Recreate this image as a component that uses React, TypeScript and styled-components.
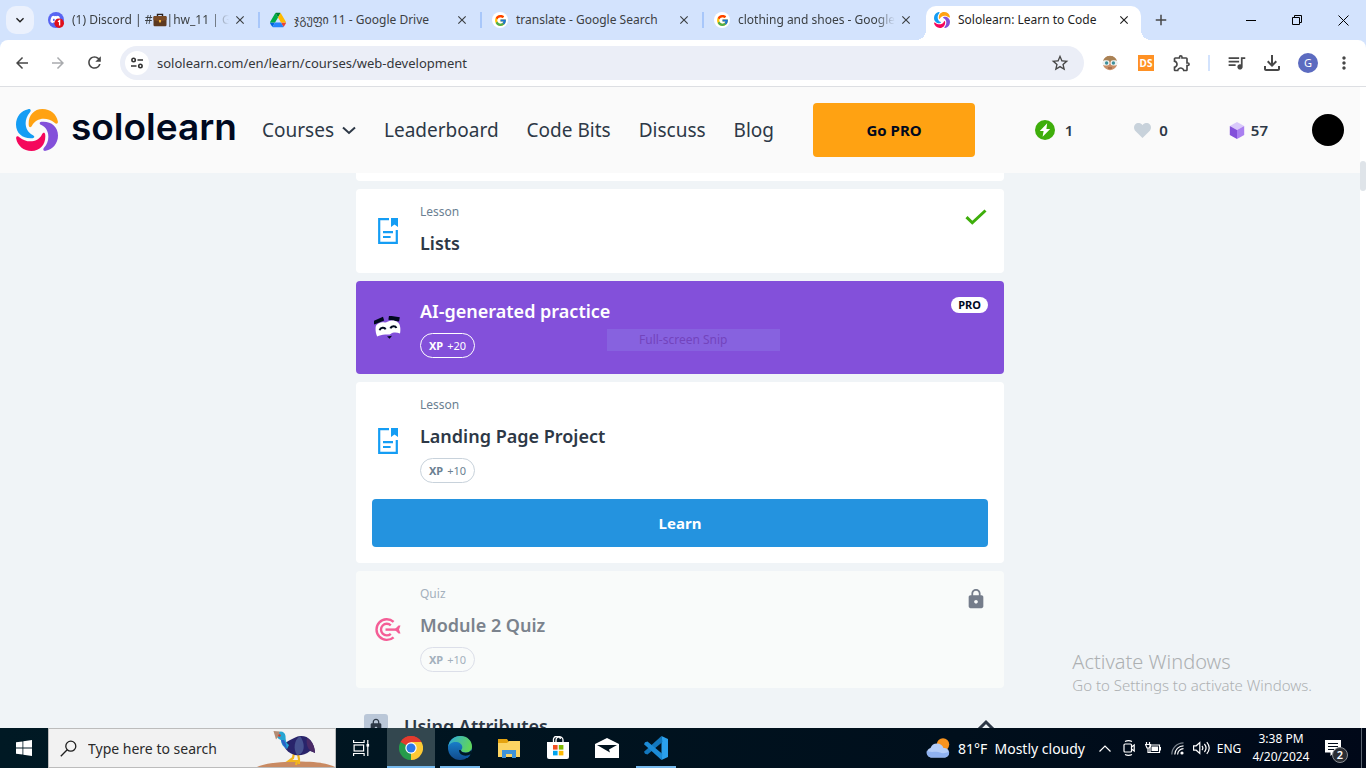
import React from "react";
import styled, { createGlobalStyle, css } from "styled-components";
import {
  MdArrowBack,
  MdArrowForward,
  MdRefresh,
  MdStarBorder,
  MdOutlineExtension,
  MdQueueMusic,
  MdOutlineFileDownload,
  MdMoreVert,
  MdLock,
  MdClose,
  MdAdd,
  MdKeyboardArrowDown,
} from "react-icons/md";
import { FcGoogle } from "react-icons/fc";
import { FaDiscord } from "react-icons/fa";

const systemFont = `"Noto Sans", "DejaVu Sans", sans-serif`;
const siteFont = `"Noto Sans", "Open Sans", sans-serif`;

const GlobalStyle = createGlobalStyle`
  *, *::before, *::after { box-sizing: border-box; }
  body { margin: 0; overflow: hidden; font-family: ${systemFont}; }
  button, input { font-family: inherit; }
  button { border: 0; padding: 0; background: none; color: inherit; cursor: pointer; }
  a { color: inherit; text-decoration: none; }
  svg { display: block; flex: none; }
  h2, h3, p { margin: 0; }
`;

const Desktop = styled.div`
  display: flex;
  flex-direction: column;
  height: 100vh;
  background: #d3e3fd;
`;

/* ---------- Browser tabs ---------- */

const TabStrip = styled.div`
  display: flex;
  height: 40px;
  padding: 6px 0 0 6px;
`;

const TabSearch = styled.button`
  display: grid;
  place-items: center;
  width: 28px;
  height: 28px;
  margin-right: 4px;
  border-radius: 10px;
  background: #ebf1fd;
  color: #1f1f1f;
`;

const Tabs = styled.div`
  display: flex;
  flex: 0 1 1103px;
  min-width: 0;
`;

const Tab = styled.div<{ $active?: boolean }>`
  position: relative;
  display: flex;
  align-items: center;
  flex: 1 1 0;
  min-width: 0;
  gap: 8px;
  padding: 0 11px 6px 10px;
  color: ${(p) => (p.$active ? "#1f1f1f" : "#3c4043")};

  ${(p) =>
    p.$active
      ? css`
          flex: 0 1 215px;
          padding: 0 8px 6px 8px;
          background: #fff;
          border-radius: 10px 10px 0 0;
          &::before,
          &::after {
            content: "";
            position: absolute;
            bottom: 0;
            width: 10px;
            height: 10px;
          }
          &::before {
            left: -10px;
            background: radial-gradient(circle at 0 0, transparent 10px, #fff 10px);
          }
          &::after {
            right: -10px;
            background: radial-gradient(circle at 100% 0, transparent 10px, #fff 10px);
          }
        `
      : css`
          &:not(:nth-last-child(2))::after {
            content: "";
            position: absolute;
            right: 0;
            top: 6px;
            width: 2px;
            height: 16px;
            background: #a8c7fa;
          }
        `}
`;

const TabTitle = styled.button<{ $fade?: boolean }>`
  display: flex;
  align-items: center;
  flex: 1;
  min-width: 0;
  overflow: hidden;
  white-space: nowrap;
  text-align: left;
  font-size: 12px;
  line-height: 20px;
  ${(p) =>
    p.$fade && "mask-image: linear-gradient(to right, #000 88%, transparent 100%);"}
`;

const TabIcon = styled.span<{ $round?: boolean }>`
  display: grid;
  place-items: center;
  flex: none;
  width: 16px;
  height: 16px;
  border-radius: 8px;
  background: ${(p) => (p.$round ? "#fff" : "transparent")};
`;

const IconButton = styled.button<{ $size: number }>`
  display: grid;
  place-items: center;
  flex: none;
  width: ${(p) => p.$size}px;
  height: ${(p) => p.$size}px;
`;

const TabClose = styled(IconButton)`
  margin-left: -6px;
`;

const NewTab = styled(IconButton)`
  margin-left: 6px;
  color: #474747;
`;

const WindowControls = styled.div`
  display: flex;
  margin: -6px 0 0 auto;
`;

const WindowButton = styled.button`
  display: grid;
  place-items: center;
  width: 46px;
  height: 40px;
`;

/* ---------- Browser toolbar ---------- */

const Toolbar = styled.div`
  display: flex;
  align-items: center;
  height: 47px;
  padding: 0 4px 1px 4px;
  background: #fff;
  border-bottom: 1px solid #dddfe3;
  border-radius: 8px 8px 0 0;
  color: #474747;
`;

const AddressBar = styled.form`
  display: flex;
  align-items: center;
  flex: 1;
  height: 34px;
  margin: 0 8px;
  padding: 0 6px 0 5px;
  border-radius: 17px;
  background: #ebeef7;
`;

const SiteInfo = styled.button`
  display: grid;
  place-items: center;
  width: 24px;
  height: 24px;
  border-radius: 12px;
  background: #fff;
`;

const AddressInput = styled.input`
  flex: 1;
  min-width: 0;
  border: 0;
  padding: 0 8px;
  background: transparent;
  color: #34363a;
  font-size: 13px;
  outline: none;
`;

const ToolDivider = styled.span`
  width: 2px;
  height: 16px;
  margin: 0 8px;
  background: #d3e3fd;
`;

const DsBadge = styled.span`
  display: grid;
  place-items: center;
  width: 16px;
  height: 16px;
  background: #ff9124;
  color: #fff;
  font-size: 10px;
  font-weight: 700;
`;

const ProfileBadge = styled.span`
  display: grid;
  place-items: center;
  width: 20px;
  height: 20px;
  border-radius: 10px;
  background: #5c6bc0;
  color: #fff;
  font-size: 11px;
`;

/* ---------- Site ---------- */

const Viewport = styled.div`
  position: relative;
  display: flex;
  flex: 1;
  min-height: 0;
`;

const Page = styled.div`
  display: flex;
  flex-direction: column;
  flex: 1;
  min-width: 0;
  overflow: hidden;
  background: #f0f4f7;
  color: #2d3846;
  font-family: ${siteFont};
`;

const ScrollTrack = styled.div`
  width: 6px;
  padding-top: 74px;
  background: #fff;
`;

const ScrollThumb = styled.div`
  height: 30px;
  border-radius: 3px;
  background: #dfe4e9;
`;

const SiteHeader = styled.header`
  display: flex;
  align-items: center;
  flex: none;
  height: 86px;
  padding: 0 16px;
  background: #fafafa;
`;

const Logo = styled.a`
  display: flex;
  gap: 13px;
  width: 222px;
  margin-right: 24px;
  color: #00091f;
  font-family: Inter, sans-serif;
  font-size: 37px;
  font-weight: 600;
  line-height: 36px;
`;

const SiteNav = styled.nav`
  display: flex;
  gap: 28px;
  font-size: 19px;
  line-height: 28px;
  white-space: nowrap;
`;

const NavLink = styled.a`
  display: flex;
  align-items: center;
  gap: 8px;
`;

const ProButton = styled.button`
  width: 162px;
  height: 54px;
  margin-left: 39px;
  border-radius: 4px;
  background: #ffa212;
  color: #00091f;
  font-size: 15px;
  font-weight: 700;
`;

const Stats = styled.div`
  display: flex;
  align-items: center;
  gap: 61px;
  margin: 0 44px 0 auto;
`;

const Stat = styled.span<{ $gap: number }>`
  display: flex;
  align-items: center;
  gap: ${(p) => p.$gap}px;
  font-size: 15px;
  font-weight: 600;
  line-height: 20px;
`;

const Avatar = styled.button`
  width: 32px;
  height: 32px;
  border-radius: 16px;
  background: #000;
`;

const Lessons = styled.main`
  display: flex;
  flex-direction: column;
  flex: 1;
  gap: 8px;
  width: 100%;
  max-width: 648px;
  min-height: 0;
  margin: 0 auto;
`;

const CardEnd = styled.div`
  flex: none;
  height: 8px;
  border-radius: 0 0 4px 4px;
  background: #fff;
`;

type Tone = "plain" | "pro" | "locked";

const Card = styled.section<{ $tone: Tone }>`
  position: relative;
  display: flex;
  flex-direction: column;
  flex: none;
  gap: 16px;
  padding: 16px;
  border-radius: 4px;
  background: ${(p) => ({ plain: "#fff", pro: "#8350da", locked: "#f9fbfa" })[p.$tone]};
  color: ${(p) => ({ plain: "#2d3846", pro: "#fff", locked: "#7b838d" })[p.$tone]};
`;

const CardBody = styled.div`
  display: flex;
  gap: 16px;
`;

const CardIcon = styled.div`
  display: grid;
  place-items: center;
  width: 32px;
`;

const CardText = styled.div`
  display: flex;
  flex-direction: column;
  align-items: flex-start;
  flex: 1;
`;

const CardKind = styled.p<{ $tone: Tone }>`
  margin-bottom: 10px;
  color: ${(p) => (p.$tone === "locked" ? "#a3b0bc" : "#6b7f92")};
  font-size: 12px;
  line-height: 14px;
`;

const CardTitle = styled.h3`
  font-size: 18px;
  font-weight: 600;
  line-height: 28px;
`;

const XpBadge = styled.span<{ $tone: Tone }>`
  display: flex;
  align-items: center;
  gap: 4px;
  height: 25px;
  margin-top: 8px;
  padding: 0 8px;
  border: 1px solid ${(p) => ({ plain: "#c8d2db", pro: "#fff", locked: "#dcdfe9" })[p.$tone]};
  border-radius: 13px;
  color: ${(p) => ({ plain: "#6b7f92", pro: "#fff", locked: "#a3b0bc" })[p.$tone]};
  font-size: 11px;
  line-height: 16px;
`;

const ProTag = styled.span`
  align-self: flex-start;
  width: 37px;
  height: 16px;
  border-radius: 8px;
  background: #fff;
  color: #00091f;
  font-size: 11px;
  font-weight: 700;
  line-height: 16px;
  text-align: center;
`;

const LearnButton = styled.button`
  height: 48px;
  border-radius: 4px;
  background: #2493df;
  color: #fff;
  font-size: 15px;
  font-weight: 700;
`;

const SnipHint = styled.span`
  position: absolute;
  left: 251px;
  top: 48px;
  width: 173px;
  height: 22px;
  padding-left: 32px;
  background: #8762df;
  color: #7344bd;
  font-size: 12px;
  line-height: 22px;
`;

const ModuleHeader = styled.div`
  display: flex;
  align-items: center;
  gap: 16px;
  padding: 16px 8px 0;
`;

const ModuleLock = styled.span`
  display: grid;
  place-items: center;
  width: 24px;
  height: 24px;
  border-radius: 3px;
  background: #bac7d8;
`;

const ModuleTitle = styled.h2`
  flex: 1;
  font-size: 18px;
  font-weight: 600;
  line-height: 28px;
`;

const Watermark = styled.div`
  position: absolute;
  right: 54px;
  bottom: 33px;
  color: #adb0b2;
  font-family: ${systemFont};
  font-size: 15px;
  line-height: 20px;
  font-weight: 300;
`;

const WatermarkTitle = styled.p`
  font-size: 20px;
  line-height: 26px;
`;

/* ---------- Taskbar ---------- */

const Taskbar = styled.footer`
  display: flex;
  flex: none;
  height: 40px;
  background: linear-gradient(to right, #001924, #000f1c 70%, #000818);
  color: #fff;
  font-size: 12px;
`;

const TaskButton = styled.button<{ $width: number; $state?: "open" | "active" }>`
  display: grid;
  place-items: center;
  flex: none;
  width: ${(p) => p.$width}px;
  height: 40px;
  background: ${(p) => (p.$state === "active" ? "#33474f" : "transparent")};
  ${(p) =>
    p.$state &&
    css`
      background-image: linear-gradient(#76b9ed, #76b9ed);
      background-repeat: no-repeat;
      background-position: center bottom;
      background-size: ${p.$state === "active" ? "100%" : "40px"} 2px;
    `}
`;

const TaskSearch = styled.form`
  display: flex;
  align-items: center;
  width: 288px;
  height: 40px;
  padding-left: 11px;
  border: 1px solid #bcbcbc;
  background: #f2f2f2;
  color: #1f1f1f;
`;

const TaskSearchInput = styled.input`
  flex: 1;
  min-width: 0;
  border: 0;
  padding: 0 0 0 11px;
  background: transparent;
  color: #2b2b2b;
  font-size: 14px;
  outline: none;
  &::placeholder {
    color: #2b2b2b;
  }
`;

const TrayItem = styled.button<{ $width: number }>`
  display: grid;
  place-items: center;
  flex: none;
  width: ${(p) => p.$width}px;
  height: 40px;
  color: #fff;
  font-size: 12px;
`;

const Weather = styled.button`
  display: flex;
  align-items: center;
  gap: 8px;
  margin-left: auto;
  padding-right: 8px;
  font-size: 14px;
  white-space: pre;
`;

const Clock = styled.button`
  flex: none;
  width: 72px;
  font-size: 12px;
  line-height: 18px;
  text-align: center;
`;

const Notifications = styled.button`
  position: relative;
  display: grid;
  place-items: center;
  width: 32px;
  margin-right: 12px;
`;

const NotificationCount = styled.span`
  position: absolute;
  left: 15px;
  top: 19px;
  width: 16px;
  height: 16px;
  border: 1px solid #8b8f95;
  border-radius: 8px;
  background: #2a2d33;
  font-size: 11px;
  font-weight: 600;
  line-height: 14px;
`;

const ShowDesktop = styled.button`
  width: 5px;
  border-left: 1px solid #5a6470;
`;

/* ---------- Drawings ---------- */

const swoosh =
  "M12.8 16.6C11.8 7.5 17.2 0 26.5 0C34.5 0 40.6 5.4 41.8 12.2C42.3 14.8 40.3 15.4 38.6 13.8C31.6 7.6 20 8.2 16.1 16.6C15.1 18.8 13.1 19 12.8 16.6Z";

const SololearnMark = ({ size }: { size: number }) => (
  <svg width={size} height={size} viewBox="0 0 42 42">
    {["#ffa212", "#8350da", "#f5075c", "#149df4"].map((fill, i) => (
      <path key={fill} d={swoosh} fill={fill} transform={`rotate(${i * 90} 21 21)`} />
    ))}
  </svg>
);

const DriveIcon = () => (
  <svg width="16" height="16" viewBox="0 0 87 78">
    <path d="M6.6 66.9l3.9 6.6c.8 1.4 2 2.5 3.3 3.3l13.7-23.8H0c0 1.6.4 3.1 1.2 4.5z" fill="#0066da" />
    <path d="M43.7 25L29.9 1.2c-1.3.8-2.5 1.9-3.3 3.3L1.2 48.5C.4 49.9 0 51.4 0 53h27.5z" fill="#00ac47" />
    <path d="M73.6 76.8c1.3-.8 2.5-1.9 3.3-3.3l9.2-16c.8-1.4 1.2-2.9 1.2-4.5H59.8l5.8 11.5z" fill="#ea4335" />
    <path d="M43.7 25L57.4 1.2C56.1.4 54.5 0 52.9 0H34.4c-1.6 0-3.1.4-4.5 1.2z" fill="#00832d" />
    <path d="M59.8 53H27.5L13.8 76.8c1.3.8 2.9 1.2 4.5 1.2H69c1.6 0 3.1-.4 4.6-1.2z" fill="#2684fc" />
    <path d="M73.4 26.5l-12.7-22c-.8-1.4-2-2.5-3.3-3.3L43.7 25l16.1 28h27.4c0-1.6-.4-3.1-1.2-4.5z" fill="#ffba00" />
  </svg>
);

const DiscordBadge = () => (
  <svg width="16" height="16" viewBox="0 0 16 16">
    <circle cx="8" cy="8" r="8" fill="#5865f2" />
    <FaDiscord x="2" y="2" size={11} color="#fff" />
    <circle cx="11.2" cy="11.2" r="4.8" fill="#e0101b" />
    <path d="M10 9.8l1.6-1.2v5" fill="none" stroke="#fff" strokeWidth="1.3" />
  </svg>
);

const Briefcase = () => (
  <svg width="14" height="14" viewBox="0 0 14 14">
    <path d="M4.5 3.5V1.4h5v2.1" fill="none" stroke="#2b201c" strokeWidth="1.4" />
    <rect x="0.5" y="3" width="13" height="10.2" rx="1.2" fill="#5d3a20" />
    <path d="M.5 4.2a1.2 1.2 0 011.2-1.2h10.6a1.2 1.2 0 011.2 1.2V7L7 8.8.5 7z" fill="#7a4a25" />
    <rect x="6" y="7" width="2" height="2.4" fill="#f3b53b" />
  </svg>
);

const TuneIcon = () => (
  <svg width="14" height="14" viewBox="0 0 14 14" fill="none" stroke="#333" strokeWidth="1.6">
    <circle cx="3.6" cy="4" r="1.7" />
    <path d="M7.5 4H13M1 10h5.5" />
    <circle cx="10.4" cy="10" r="1.7" />
  </svg>
);

const OwlIcon = () => (
  <svg width="16" height="16" viewBox="0 0 16 16">
    <circle cx="8" cy="8" r="7.2" fill="#c98e66" />
    <path d="M1 6.5a7.2 7.2 0 0114 0z" fill="#a98255" />
    <rect x="0.5" y="5.2" width="7" height="5.4" rx="2.4" fill="#eef3f3" />
    <rect x="8.5" y="5.2" width="7" height="5.4" rx="2.4" fill="#eef3f3" />
    <circle cx="4.6" cy="8" r="1.7" fill="#3e8f9b" />
    <circle cx="11.4" cy="8" r="1.7" fill="#3e8f9b" />
    <path d="M6 13h4" stroke="#8a553a" strokeWidth="1" />
  </svg>
);

const DocIcon = () => (
  <svg width="20" height="26" viewBox="0 0 20 26">
    <path d="M11 1.2H1.2v23.6h17.6V12" fill="none" stroke="#149df4" strokeWidth="2.2" />
    <path d="M13 0h7v9l-3.5-2.6L13 9z" fill="#149df4" />
    <path d="M5 14.2h10M5 19h7.6" fill="none" stroke="#149df4" strokeWidth="2.2" />
  </svg>
);

const RobotFace = () => (
  <svg width="28" height="24" viewBox="1 1 28 24">
    <path d="M.2 6L10 1.8l1.2 3.6L1.4 9.4z" fill="#00091f" />
    <path d="M16 .6l10.8 1.600-.8 4.200L15.400 4.800z" fill="#00091f" />
    <path d="M2.600 12.400C3.200 8.400 8 7 11.600 7.400c2.200.3 3-1 5.600-1.600 4.600-.9 9 1.200 9.800 5.400.6 2 .4 5.600 0 7.400-3.400-1.400-7-1.400-9.400.4-1.400 1-3.200.2-5.400.6-3.200.5-5.800.8-8 1.800-1-1.800-2-6.200-1.600-9z" fill="#fff" />
    <path d="M6.600 15.200c.8-3 5-3.400 6-.8M17.400 13.400c1-2.800 5-3 6-.4" fill="none" stroke="#00091f" strokeWidth="2" />
    <path d="M14 21.600l5-.8-2.400 3z" fill="#00091f" />
  </svg>
);

const TargetIcon = () => (
  <svg width="26" height="24" viewBox="0 0 26 24" fill="none" stroke="#f45e96" strokeWidth="2.4">
    <path d="M18.600 3.800A10.300 10.300 0 1018.600 19.300" />
    <path d="M15.800 7.400A5.800 5.800 0 1015.800 15.800" />
    <path d="M10.500 11.600H21" />
    <path d="M19.500 11.600l4-4h2l-1.500 4 1.500 4h-2z" fill="#f45e96" stroke="none" />
  </svg>
);

const CheckIcon = () => (
  <svg width="22" height="16" viewBox="0 0 22 16" fill="none" stroke="#3eae0b" strokeWidth="3">
    <path d="M1.500 8.200l5.800 5.600L20.500 1.500" />
  </svg>
);

const ChevronDown = () => (
  <svg width="14" height="9" viewBox="0 0 14 9" fill="none" stroke="#2d3846" strokeWidth="2">
    <path d="M1 1.500l6 5.500 6-5.500" />
  </svg>
);

const ChevronUp = () => (
  <svg width="20" height="20" viewBox="0 0 20 20" fill="none" stroke="#2d3846" strokeWidth="3">
    <path d="M2 14l8-8 8 8" />
  </svg>
);

const BoltIcon = () => (
  <svg width="20" height="20" viewBox="0 0 20 20">
    <circle cx="10" cy="10" r="10" fill="#3eae0b" />
    <path d="M12.200 3.200L4.800 11h3.800l-1 5.800L15.200 9h-3.800z" fill="#fff" />
  </svg>
);

const HeartIcon = () => (
  <svg width="17" height="15" viewBox="0 0 17 15">
    <path d="M8.500 15L1.400 8C-.6 5.800-.3 2.600 1.600 1 3.800-.8 7-.2 8.500 2.200 10-.2 13.200-.8 15.400 1c1.900 1.600 2.200 4.800.2 7z" fill="#c8d2db" />
  </svg>
);

const GemIcon = () => (
  <svg width="16" height="17" viewBox="0 0 16 17">
    <path d="M8 0l7.200 4L8 8 .8 4z" fill="#d9c9fb" />
    <path d="M.8 4L8 8v9L.8 13z" fill="#8350da" />
    <path d="M15.200 4L8 8v9l7.200-4z" fill="#a97ff0" />
  </svg>
);

const WindowsIcon = () => (
  <svg width="16" height="16" viewBox="0 0 16 16" fill="#fff">
    <path d="M0 2.300L6.500 1.400v6.200H0zM7.300 1.300L16 0v7.600H7.300zM0 8.400h6.500v6.200L0 13.700zM7.300 8.400H16V16l-8.700-1.300z" />
  </svg>
);

const SearchIcon = () => (
  <svg width="17" height="17" viewBox="0 0 17 17" fill="none" stroke="#1f1f1f" strokeWidth="1.300">
    <circle cx="10.800" cy="6.200" r="5" />
    <path d="M7.200 9.800L.8 16.200" />
  </svg>
);

const Cassowary = () => (
  <svg width="78" height="38" viewBox="0 0 78 38">
    <path d="M0 38c8-3.500 22-5.500 40-5.500S70 34 78 38z" fill="#c98a62" />
    <path d="M37 24l-1 5-4 3 8 0-1 4M41 25l1 5 0 5" fill="none" stroke="#f2b51d" strokeWidth="2.200" />
    <path d="M26 14c6-1 10-6 17-7 8-.8 14 5 15 17-2-1-4-2-5-2-6 5-13 5.500-19 2.500-4-2-7-6-8-10.500z" fill="#29246b" />
    <path d="M43 7c-6 4-7 13-3 19 6 0 10-9 3-19z" fill="#46518f" />
    <path d="M50 9c-1 5 0 10 4 13l4 2c0-7-3-12-8-15z" fill="#4a2a66" />
    <path d="M19 5c3-4 9-3 9.500 2 .3 4 0 6 3.500 9l-2 4c-4-2-6-5-6-9-2-.6-4-2-5-6z" fill="#25a5d3" />
    <path d="M24 11c1 4 3 7 6 9l-1-5-2-4z" fill="#2b62c8" />
    <path d="M16.500 2l6 .5-.5 4-3 4z" fill="#b38b73" />
    <circle cx="22.500" cy="6.500" r="1.200" fill="#d8382c" />
  </svg>
);

const TaskViewIcon = () => (
  <svg width="17" height="16" viewBox="0 0 17 16" fill="none" stroke="#fff" strokeWidth="1.200">
    <path d="M.600 0v2.500h10.500V0M.600 16v-2.500h10.500V16M14.800 0v16" />
    <rect x="1.100" y="5" width="9.500" height="6" />
    <rect x="13.500" y="4" width="2.600" height="2.600" fill="#fff" stroke="none" />
  </svg>
);

const ChromeIcon = () => (
  <svg width="24" height="24" viewBox="0 0 24 24">
    <path d="M12 12L1.600 6A12 12 0 0122.400 6z" fill="#e33b2e" />
    <path d="M12 12L22.400 6A12 12 0 0112 24z" fill="#fcc934" />
    <path d="M12 12V24A12 12 0 011.600 6z" fill="#269b4b" />
    <path d="M12 6h10.400L17.200 15 12 24l5-9z" fill="#fcc934" />
    <path d="M1.600 6l5.300 9 4 3L12 12l0-6z" fill="#269b4b" />
    <path d="M1.600 6L12 12l0-6h10.400A12 12 0 001.600 6z" fill="#e33b2e" />
    <circle cx="12" cy="12" r="5.700" fill="#fff" />
    <circle cx="12" cy="12" r="4.500" fill="#2b78e8" />
  </svg>
);

const EdgeIcon = () => (
  <svg width="24" height="24" viewBox="0 0 24 24">
    <defs>
      <linearGradient id="edgeTop" x1="0" y1="0" x2="1" y2="0.300">
        <stop offset="0" stopColor="#2da8e0" />
        <stop offset="1" stopColor="#5fd45c" />
      </linearGradient>
      <linearGradient id="edgeBody" x1="0" y1="0" x2="0" y2="1">
        <stop offset="0" stopColor="#1b8fdd" />
        <stop offset="1" stopColor="#114a8b" />
      </linearGradient>
    </defs>
    <circle cx="12" cy="12" r="12" fill="url(#edgeBody)" />
    <path d="M.100 11C1 4.500 6 0 12.500 0 19.500 0 24 5 24 10.500c0 4-3 6-6.500 6-3 0-4.500-1.200-4.500-2 0-.8 1.300-1.200 1.300-3.200C14.300 8 11 6 7.800 6 4 6 1 8 .1 11z" fill="url(#edgeTop)" />
    <path d="M9.500 12c-1.500 5 2.500 9 7.500 8.500 2.500-.2 4-1 5.500-2-.5 1-1.500 2.300-3 3.500C13 22 8 18 9.500 12z" fill="#0c59a4" />
    <path d="M13 14.300c0 1.200 1.800 2.400 4.800 2.400 2.500 0 4.500-1 5.600-2.600l.6 2.400-1.400 1.800c-5 3-11.500 1-11.600-4.300z" fill="#001824" />
  </svg>
);

const ExplorerIcon = () => (
  <svg width="22" height="19" viewBox="0 0 22 19">
    <path d="M0 0h9l2 3h11v15H0z" fill="#e5a30f" />
    <path d="M0 4h9l2-2h11v16H0z" fill="#fcd462" />
    <path d="M4 19v-8h14v8h-4v-4H8v4z" fill="#3f93d8" />
  </svg>
);

const StoreIcon = () => (
  <svg width="24" height="24" viewBox="0 0 24 24">
    <path d="M7.500 7V4.500a3.500 3.500 0 017-1.500M10 7V4a3.500 3.500 0 017 .5V7" fill="none" stroke="#fff" strokeWidth="1.300" />
    <path d="M1 6h22v15a2 2 0 01-2 2H3a2 2 0 01-2-2z" fill="#fff" />
    <path d="M7 9h4.600v4.600H7z" fill="#f25022" />
    <path d="M12.800 9h4.600v4.600h-4.600z" fill="#7fba00" />
    <path d="M7 14.800h4.600v4.600H7z" fill="#00a4ef" />
    <path d="M12.800 14.800h4.600v4.600h-4.600z" fill="#ffb900" />
  </svg>
);

const MailIcon = () => (
  <svg width="24" height="20" viewBox="0 0 24 20">
    <path d="M0 6L12 0l12 6v14H0z" fill="#fff" />
    <path d="M2 7h20l-8 4.500 1 3z" fill="#00131f" />
  </svg>
);

const CodeIcon = () => (
  <svg width="24" height="24" viewBox="0 0 24 24">
    <path d="M17.500 0L24 3v18l-6.500 3z" fill="#2ba0ec" />
    <path d="M17.500 0l1 6L3.500 18.500 1 17.800 0 15.800z" fill="#1277bd" />
    <path d="M17.500 24l1-6L3.500 5.500 1 6.200 0 8.200z" fill="#1c8bd6" />
  </svg>
);

const WeatherIcon = () => (
  <svg width="24" height="20" viewBox="0 0 24 20">
    <circle cx="17" cy="6.500" r="6.200" fill="#f7931e" />
    <path d="M5 19.500a5 5 0 01-.5-9.600A7 7 0 0117.500 10a4.800 4.800 0 011.500 9.500z" fill="#b4cdf8" />
    <path d="M5 19.500a5 5 0 01-4-7c4 3 9 0 13 2 3 1.500 6 .5 9-1a4.800 4.800 0 01-4 6z" fill="#8fb2f0" />
  </svg>
);

const tray = { fill: "none", stroke: "#fff", strokeWidth: 1.2 };

const MeetIcon = () => (
  <svg width="12" height="16" viewBox="0 0 12 16" {...tray}>
    <rect x="1" y="4" width="7.500" height="8" rx="1" />
    <path d="M8.500 7L11.200 5v6L8.500 9M2 1.500C4.500.3 6.500.3 9 1.500M2 14.500c2.500 1.200 4.500 1.200 7 0" />
  </svg>
);

const BatteryIcon = () => (
  <svg width="16" height="12" viewBox="0 0 16 12" {...tray}>
    <path d="M5 3h9.500v7.500H5z" />
    <path d="M6.500 4.500h6.500V9H6.500z" fill="#fff" stroke="none" />
    <path d="M15.400 5v3.500M1.500 0v2M4.500 0v2M.500 2.500h5v2L4 6H2zM3 6v4.500h2" />
  </svg>
);

const WifiIcon = () => (
  <svg width="13" height="13" viewBox="0 0 13 13" {...tray}>
    <path d="M.800 12.500A11.700 11.700 0 0112.500.800" stroke="#77808a" />
    <path d="M3.800 12.500a8.700 8.700 0 018.700-8.700M6.600 12.500a5.900 5.900 0 015.900-5.900" />
    <circle cx="11" cy="11" r="1.600" fill="#fff" stroke="none" />
  </svg>
);

const SoundIcon = () => (
  <svg width="17" height="14" viewBox="0 0 17 14" {...tray}>
    <path d="M.600 4.800h2.600L6.800 1.500v11L3.200 9.200H.600zM9 5c1 1.200 1 2.800 0 4M11.400 3c2 2.400 2 5.600 0 8M13.800 1.200c3 3.600 3 8 0 11.600" />
  </svg>
);

const MessageIcon = () => (
  <svg width="16" height="16" viewBox="0 0 16 16">
    <path d="M0 0h16v12.500H9L5.500 16v-3.500H0z" fill="#fff" />
    <path d="M3 3.500h10M3 6.500h10M3 9.500h6" stroke="#000b1a" />
  </svg>
);

/* ---------- Content ---------- */

const browserTabs = [
  {
    icon: <DiscordBadge />,
    title: (
      <>
        (1) Discord | #<Briefcase />|hw_11 | Go
      </>
    ),
    fade: true,
  },
  { icon: <DriveIcon />, title: "ჯგუფი 11 - Google Drive" },
  { icon: <FcGoogle size={13} />, title: "translate - Google Search", round: true },
  { icon: <FcGoogle size={13} />, title: "clothing and shoes - Google", round: true, fade: true },
  { icon: <SololearnMark size={16} />, title: "Sololearn: Learn to Code", active: true },
];

const Xp = ({ tone, amount }: { tone: Tone; amount: number }) => (
  <XpBadge $tone={tone}>
    <b>XP</b> +{amount}
  </XpBadge>
);

export default function App() {
  return (
    <Desktop>
      <GlobalStyle />

      <TabStrip>
        <TabSearch aria-label="Search tabs">
          <MdKeyboardArrowDown size={16} />
        </TabSearch>
        <Tabs>
          {browserTabs.map((tab, i) => (
            <Tab key={i} $active={tab.active}>
              <TabIcon $round={tab.round}>{tab.icon}</TabIcon>
              <TabTitle $fade={tab.fade}>{tab.title}</TabTitle>
              <TabClose $size={18} aria-label="Close tab">
                <MdClose size={14} />
              </TabClose>
            </Tab>
          ))}
        </Tabs>
        <NewTab $size={28} aria-label="New tab">
          <MdAdd size={18} />
        </NewTab>
        <WindowControls>
          <WindowButton aria-label="Minimize">
            <svg width="10" height="10" stroke="#000"><path d="M0 5.500h10" /></svg>
          </WindowButton>
          <WindowButton aria-label="Restore">
            <svg width="10" height="10" fill="none" stroke="#000">
              <path d="M.5 2.500h7v7h-7zM2.500 2.500v-2h7v7h-2" />
            </svg>
          </WindowButton>
          <WindowButton aria-label="Close">
            <svg width="11" height="11" stroke="#000"><path d="M.5.5l10 10M10.500.5l-10 10" /></svg>
          </WindowButton>
        </WindowControls>
      </TabStrip>

      <Toolbar>
        <IconButton $size={36} aria-label="Back"><MdArrowBack size={18} /></IconButton>
        <IconButton $size={36} aria-label="Forward"><MdArrowForward size={18} color="#a9abae" /></IconButton>
        <IconButton $size={36} aria-label="Reload"><MdRefresh size={19} /></IconButton>
        <AddressBar onSubmit={(e) => e.preventDefault()}>
          <SiteInfo type="button" aria-label="Site information"><TuneIcon /></SiteInfo>
          <AddressInput
            aria-label="Address"
            defaultValue="sololearn.com/en/learn/courses/web-development"
          />
          <IconButton type="button" $size={36} aria-label="Bookmark"><MdStarBorder size={20} /></IconButton>
        </AddressBar>
        <IconButton $size={36} aria-label="Owl extension"><OwlIcon /></IconButton>
        <IconButton $size={36} aria-label="DS extension"><DsBadge>DS</DsBadge></IconButton>
        <IconButton $size={36} aria-label="Extensions"><MdOutlineExtension size={20} /></IconButton>
        <ToolDivider />
        <IconButton $size={36} aria-label="Media"><MdQueueMusic size={21} /></IconButton>
        <IconButton $size={36} aria-label="Downloads"><MdOutlineFileDownload size={24} /></IconButton>
        <IconButton $size={36} aria-label="Profile"><ProfileBadge>G</ProfileBadge></IconButton>
        <IconButton $size={36} aria-label="Menu"><MdMoreVert size={20} /></IconButton>
      </Toolbar>

      <Viewport>
        <Page>
          <SiteHeader>
            <Logo href="#"><SololearnMark size={42} />sololearn</Logo>
            <SiteNav>
              <NavLink href="#courses">Courses <ChevronDown /></NavLink>
              <NavLink href="#leaderboard">Leaderboard</NavLink>
              <NavLink href="#code-bits">Code Bits</NavLink>
              <NavLink href="#discuss">Discuss</NavLink>
              <NavLink href="#blog">Blog</NavLink>
            </SiteNav>
            <ProButton>Go PRO</ProButton>
            <Stats>
              <Stat $gap={10}><BoltIcon />1</Stat>
              <Stat $gap={8}><HeartIcon />0</Stat>
              <Stat $gap={6}><GemIcon />57</Stat>
            </Stats>
            <Avatar aria-label="Account" />
          </SiteHeader>

          <Lessons>
            <CardEnd />
            <Card $tone="plain">
              <CardBody>
                <CardIcon><DocIcon /></CardIcon>
                <CardText>
                  <CardKind $tone="plain">Lesson</CardKind>
                  <CardTitle>Lists</CardTitle>
                </CardText>
                <IconButton as="span" $size={24}><CheckIcon /></IconButton>
              </CardBody>
            </Card>

            <Card $tone="pro">
              <CardBody>
                <CardIcon><RobotFace /></CardIcon>
                <CardText>
                  <CardTitle>AI-generated practice</CardTitle>
                  <Xp tone="pro" amount={20} />
                </CardText>
                <ProTag>PRO</ProTag>
              </CardBody>
              <SnipHint>Full-screen Snip</SnipHint>
            </Card>

            <Card $tone="plain">
              <CardBody>
                <CardIcon><DocIcon /></CardIcon>
                <CardText>
                  <CardKind $tone="plain">Lesson</CardKind>
                  <CardTitle>Landing Page Project</CardTitle>
                  <Xp tone="plain" amount={10} />
                </CardText>
              </CardBody>
              <LearnButton>Learn</LearnButton>
            </Card>

            <Card $tone="locked">
              <CardBody>
                <CardIcon><TargetIcon /></CardIcon>
                <CardText>
                  <CardKind $tone="locked">Quiz</CardKind>
                  <CardTitle>Module 2 Quiz</CardTitle>
                  <Xp tone="locked" amount={10} />
                </CardText>
                <IconButton as="span" $size={24}><MdLock color="#757d8b" size={22} /></IconButton>
              </CardBody>
            </Card>

            <ModuleHeader>
              <ModuleLock><MdLock color="#2d3846" size={16} /></ModuleLock>
              <ModuleTitle>Using Attributes</ModuleTitle>
              <ChevronUp />
            </ModuleHeader>
          </Lessons>
        </Page>
        <ScrollTrack><ScrollThumb /></ScrollTrack>
        <Watermark>
          <WatermarkTitle>Activate Windows</WatermarkTitle>
          <p>Go to Settings to activate Windows.</p>
        </Watermark>
      </Viewport>

      <Taskbar>
        <TaskButton $width={48} aria-label="Start"><WindowsIcon /></TaskButton>
        <TaskSearch onSubmit={(e) => e.preventDefault()}>
          <SearchIcon />
          <TaskSearchInput aria-label="Search" placeholder="Type here to search" />
          <Cassowary />
        </TaskSearch>
        <TaskButton $width={51} aria-label="Task view"><TaskViewIcon /></TaskButton>
        <TaskButton $width={48} $state="active" aria-label="Chrome"><ChromeIcon /></TaskButton>
        <TaskButton $width={49} $state="open" aria-label="Edge"><EdgeIcon /></TaskButton>
        <TaskButton $width={49} aria-label="File Explorer"><ExplorerIcon /></TaskButton>
        <TaskButton $width={49} aria-label="Store"><StoreIcon /></TaskButton>
        <TaskButton $width={49} aria-label="Mail"><MailIcon /></TaskButton>
        <TaskButton $width={49} $state="open" aria-label="Visual Studio Code"><CodeIcon /></TaskButton>
        <Weather><WeatherIcon />{"81°F  Mostly cloudy"}</Weather>
        <TrayItem $width={24} aria-label="Show hidden icons">
          <svg width="12" height="7" viewBox="0 0 12 7" {...tray}><path d="M.500 6.500L6 1l5.500 5.500" /></svg>
        </TrayItem>
        <TrayItem $width={24} aria-label="Meet Now"><MeetIcon /></TrayItem>
        <TrayItem $width={24} aria-label="Battery"><BatteryIcon /></TrayItem>
        <TrayItem $width={24} aria-label="Network"><WifiIcon /></TrayItem>
        <TrayItem $width={24} aria-label="Volume"><SoundIcon /></TrayItem>
        <TrayItem $width={32}>ENG</TrayItem>
        <Clock>3:38 PM<br />4/20/2024</Clock>
        <Notifications aria-label="Notifications">
          <MessageIcon />
          <NotificationCount>2</NotificationCount>
        </Notifications>
        <ShowDesktop aria-label="Show desktop" />
      </Taskbar>
    </Desktop>
  );
}
